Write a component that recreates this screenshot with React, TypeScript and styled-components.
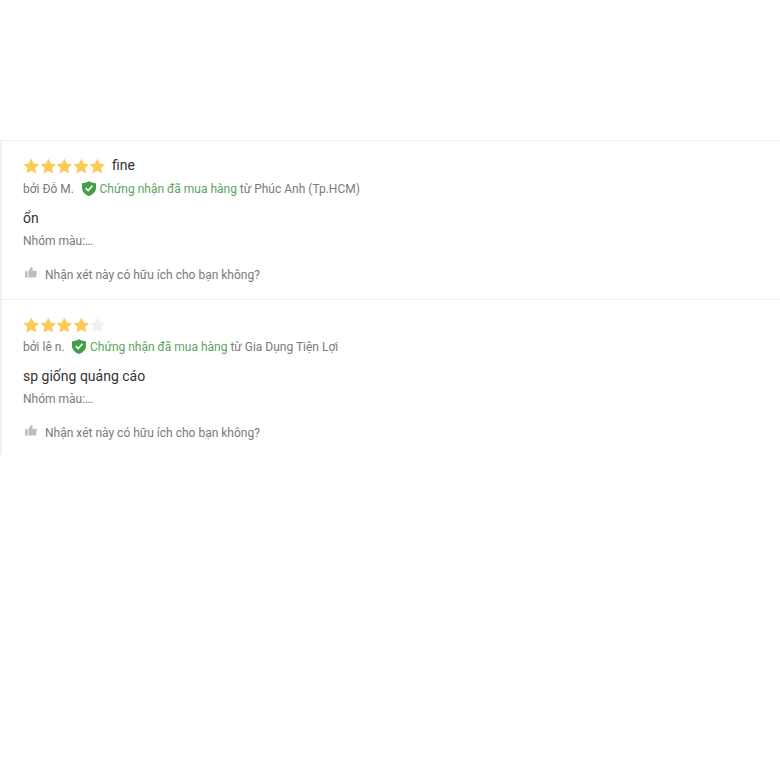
import React from "react";
import styled, { createGlobalStyle } from "styled-components";

const Global = createGlobalStyle`
  html, body { margin: 0; padding: 0; background: #fff; }
  body { font-family: Roboto, "Noto Sans", sans-serif; }
`;

const Page = styled.div`
  width: 780px;
  height: 780px;
  padding-top: 140px;
  box-sizing: border-box;
  overflow: hidden;
`;

const List = styled.div`
  border-left: 2px solid #f0f1f7;
`;

const Review = styled.article<{ $last?: boolean }>`
  box-sizing: border-box;
  height: ${(p) => (p.$last ? 156 : 159)}px;
  margin-left: -2px;
  padding: 15px 0 0 23px;
  border-top: 1px solid #eff0f5;
`;

const TitleRow = styled.div`
  display: flex;
  align-items: center;
  height: 20px;
`;

const Stars = styled.div`
  display: flex;
  width: 83px;
`;

const Title = styled.span`
  margin-left: 6px;
  margin-top: -3px;
  font-size: 14px;
  line-height: 20px;
  color: #333;
`;

const MetaRow = styled.div<{ $mt: number }>`
  display: flex;
  align-items: center;
  height: 20px;
  margin-top: ${(p) => p.$mt}px;
  font-size: 12px;
  color: #7a7a7a;
  white-space: pre;
`;

const Author = styled.span`
  margin-right: 7.5px;
`;

const ShieldSlot = styled.span`
  display: flex;
  margin-top: -2px;
`;

const Verified = styled.span`
  color: #5aa45e;
  margin-left: 4px;
`;

const Body = styled.p`
  margin: 9px 0 0;
  height: 20px;
  font-size: 14px;
  line-height: 20px;
  color: #333;
`;

const Variant = styled.div`
  margin-top: 5px;
  font-size: 12px;
  line-height: 16px;
  color: #7a7a7a;
`;

const Helpful = styled.div`
  display: flex;
  align-items: center;
  margin-top: 18px;
  height: 16px;
  font-size: 12px;
  color: #7a7a7a;
`;

const ThumbSlot = styled.span`
  display: flex;
  margin: -5px 0 0 2px;
`;

const HelpText = styled.span`
  margin-left: 8px;
`;

const Star = ({ on }: { on: boolean }) => (
  <svg width="16.6" height="16" viewBox="0 0 20 19" aria-hidden="true">
    <path
      d="M10 .6l2.900 6 6.500.8-4.800 4.500 1.300 6.500L10 15.200l-5.900 3.200 1.300-6.500L.6 7.400l6.500-.8z"
      fill={on ? "#fbcb55" : "#eff0f5"}
    />
  </svg>
);

const Shield = () => (
  <svg width="14" height="15" viewBox="0 0 15 16" aria-hidden="true">
    <path
      d="M7.500 0C9.600 1.500 11.800 2.200 15 2.400v5C15 11.400 11.800 14.400 7.500 16 3.200 14.400 0 11.400 0 7.400v-5C3.200 2.200 5.400 1.500 7.500 0z"
      fill="#43a047"
    />
    <path d="M4 7.600l2.600 2.600L11.200 5" fill="none" stroke="#fff" strokeWidth="1.700" />
  </svg>
);

const Thumb = () => (
  <svg width="12" height="11" viewBox="0 0 14 13" aria-hidden="true">
    <rect x="0" y="5" width="3" height="7.500" fill="#bdbdbd" />
    <path
      d="M4 5l3-5c1.300 0 2 .8 2 2L8.500 4.500h4.200c.8 0 1.300.6 1.200 1.400l-1 5.800c-.1.500-.6.800-1.100.8H4z"
      fill="#bdbdbd"
    />
  </svg>
);

type R = {
  stars: number;
  title?: string;
  author: string;
  metaTop: number;
  seller: string;
  body: string;
};

const reviews: R[] = [
  { stars: 5, title: "fine", author: "bởi Đỗ M.", metaTop: 3, seller: "Phúc Anh (Tp.HCM)", body: "ổn" },
  { stars: 4, author: "bởi lê n.", metaTop: 2, seller: "Gia Dụng Tiện Lợi", body: "sp giống quảng cáo" },
];

export default function App() {
  return (
    <Page>
      <Global />
      <List>
        {reviews.map((r, i) => (
          <Review key={r.author} $last={i === reviews.length - 1}>
            <TitleRow>
              <Stars>
                {[0, 1, 2, 3, 4].map((n) => (
                  <Star key={n} on={n < r.stars} />
                ))}
              </Stars>
              {r.title && <Title>{r.title}</Title>}
            </TitleRow>
            <MetaRow $mt={r.metaTop}>
              <Author>{r.author}</Author>
              <ShieldSlot>
                <Shield />
              </ShieldSlot>
              <Verified>Chứng nhận đã mua hàng</Verified>
              {" từ " + r.seller}
            </MetaRow>
            <Body>{r.body}</Body>
            <Variant>Nhóm màu:…</Variant>
            <Helpful>
              <ThumbSlot>
                <Thumb />
              </ThumbSlot>
              <HelpText>Nhận xét này có hữu ích cho bạn không?</HelpText>
            </Helpful>
          </Review>
        ))}
      </List>
    </Page>
  );
}
